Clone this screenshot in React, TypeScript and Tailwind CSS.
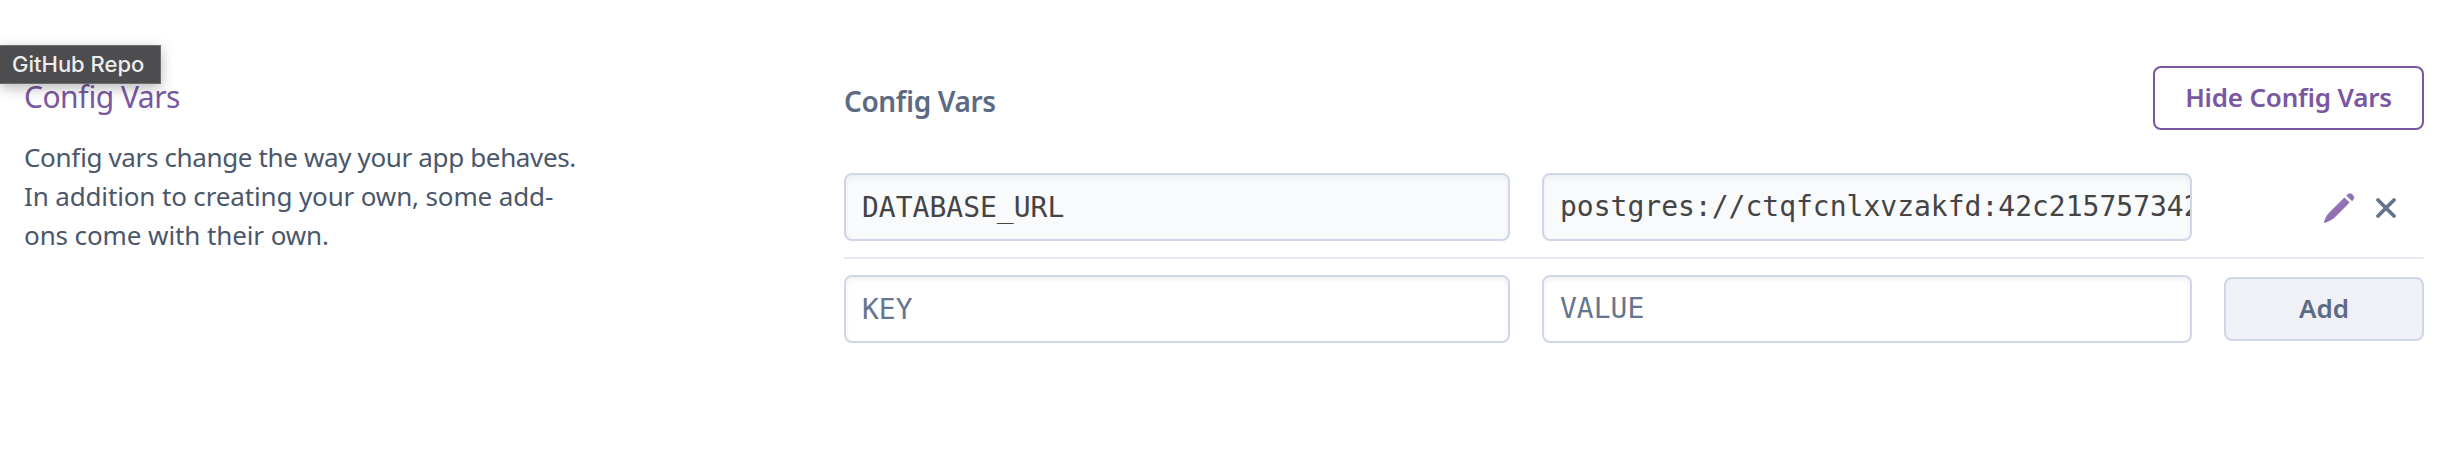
import React from "react";

const field =
  "block h-[68px] min-w-0 rounded-lg border-2 border-[#cfd7e6] pl-4 pr-0 font-['DejaVu_Sans_Mono',monospace] text-[28px] leading-8 text-[#444446] shadow-[inset_0_3px_5px_rgba(60,80,120,0.07)] outline-none placeholder:text-[#667690] placeholder:opacity-100";

function Pencil() {
  return (
    <svg width="32" height="32" viewBox="0 0 32 32">
      <defs>
        <linearGradient id="pencil" x1="0" y1="0" x2="1" y2="1">
          <stop offset="0" stopColor="#9e7cc1" />
          <stop offset="1" stopColor="#8567a8" />
        </linearGradient>
      </defs>
      <path
        d="M21.4 5.4 26.6 10.6 12 25.2Q8.2 29 .8 31Q2.2 24.6 6 20.8ZM23.2 3.8 25 2Q27.1 .2 29.2 2.2L30.4 3.6Q32 5.8 30.4 7.6L29.2 9.2Z"
        fill="url(#pencil)"
      />
    </svg>
  );
}

export default function App() {
  return (
    <main className="relative flex h-[458px] w-[2460px] overflow-hidden bg-white font-['Noto_Sans',sans-serif] [font-feature-settings:'liga'_1]">
      <div className="absolute left-0 top-[45px] flex h-[39px] w-[161px] items-center border border-l-0 border-[#6b6d6f] bg-[#4d4d4f] pl-3 font-['Inter',sans-serif] text-[22px] font-medium whitespace-nowrap text-[#ececec] shadow-[0_4px_14px_rgba(0,0,0,0.28)]">
        GitHub Repo
      </div>
      <aside className="w-[844px] pl-6 pt-[77px]">
        <h2 className="text-[30px] leading-10 tracking-[-0.5px] text-[#79589f]">Config Vars</h2>
        <p className="mt-[21px] text-[26px] leading-[39px] text-[#4a576b]">
          <span className="tracking-[-0.36px]">Config vars change the way your app behaves.</span>
          <br />
          <span className="tracking-[-0.14px]">In addition to creating your own, some add-</span>
          <br />
          <span className="tracking-[-0.1px]">ons come with their own.</span>
        </p>
      </aside>
      <section className="w-[1580px] pt-[66px]">
        <header className="flex h-16 justify-between">
          <h3 className="pt-[15px] text-[28px] font-semibold leading-10 tracking-[-0.4px] text-[#5c6b84]">Config Vars</h3>
          <button className="h-16 w-[271px] rounded-lg border-2 border-[#79589f] pb-0.5 text-[26px] font-semibold tracking-[-0.2px] whitespace-nowrap text-[#79589f]">
            Hide Config Vars
          </button>
        </header>
        <div className="mt-[43px] flex h-[86px] items-start border-b-2 border-[#e5e9f1]">
          <input className={`${field} w-[666px] bg-[#f9fafc]`} readOnly value="DATABASE_URL" />
          <input
            className={`${field} ml-8 w-[650px] bg-[#f9fafc] pb-0.5`}
            readOnly
            value="postgres://ctqfcnlxvzakfd:42c215757342"
          />
          <div className="flex flex-1 justify-end gap-5 pr-[27px] pt-[19px]">
            <Pencil />
            <svg width="22" height="22" viewBox="0 0 22 22" className="mt-[5px]">
              <path d="M3 3 19 19M19 3 3 19" stroke="#62738d" strokeWidth="3.8" strokeLinecap="round" />
            </svg>
          </div>
        </div>
        <div className="mt-4 flex items-center">
          <input className={`${field} w-[666px] bg-white`} placeholder="KEY" />
          <input className={`${field} ml-8 w-[650px] bg-white pb-0.5`} placeholder="VALUE" />
          <button className="ml-8 h-16 w-[200px] rounded-lg border-2 border-[#cfd7e6] bg-[#eff1f6] pb-0.5 text-[26px] font-semibold text-[#5c6b84]">
            Add
          </button>
        </div>
      </section>
    </main>
  );
}
